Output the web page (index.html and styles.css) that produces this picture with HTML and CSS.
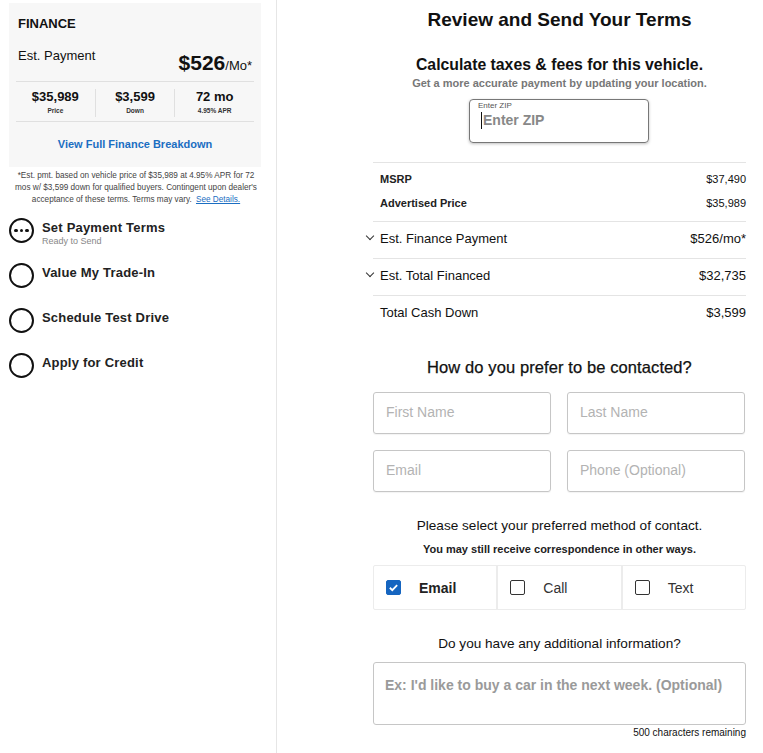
FILE: index.html
```html
<!DOCTYPE html>
<html>
<head>
<meta charset="utf-8">
<link rel="stylesheet" href="styles.css">
</head>
<body>
<div class="page">
  <aside class="side">
    <div class="card">
      <div class="card-title">FINANCE</div>
      <div class="pay-row">
        <span class="pay-label">Est. Payment</span>
        <span class="pay-value"><span class="big">$526</span><span class="mo">/Mo*</span></span>
      </div>
      <div class="stats">
        <div class="stat"><div class="sv">$35,989</div><div class="sl">Price</div></div>
        <div class="stat"><div class="sv">$3,599</div><div class="sl">Down</div></div>
        <div class="stat"><div class="sv">72 mo</div><div class="sl">4.95% APR</div></div>
      </div>
      <a class="breakdown">View Full Finance Breakdown</a>
    </div>
    <p class="disclaimer">*Est. pmt. based on vehicle price of $35,989 at 4.95% APR for 72 mos w/ $3,599 down for qualified buyers. Contingent upon dealer's acceptance of these terms. Terms may vary. <a class="see">See Details.</a></p>
    <ul class="steps">
      <li class="step active">
        <span class="ring"><span class="dot"></span><span class="dot"></span><span class="dot"></span></span>
        <div><div class="step-name">Set Payment Terms</div><div class="step-sub">Ready to Send</div></div>
      </li>
      <li class="step"><span class="ring"></span><div class="step-name">Value My Trade-In</div></li>
      <li class="step"><span class="ring"></span><div class="step-name">Schedule Test Drive</div></li>
      <li class="step"><span class="ring"></span><div class="step-name">Apply for Credit</div></li>
    </ul>
  </aside>
  <main class="main">
    <div class="content">
      <h1 class="title">Review and Send Your Terms</h1>
      <h2 class="sub">Calculate taxes &amp; fees for this vehicle.</h2>
      <p class="hint">Get a more accurate payment by updating your location.</p>
      <div class="zip">
        <span class="zip-label">Enter ZIP</span>
        <span class="zip-ph"><span class="caret"></span>Enter ZIP</span>
      </div>

      <div class="summary">
        <div class="group small">
          <div class="line"><span>MSRP</span><span>$37,490</span></div>
          <div class="line"><span>Advertised Price</span><span>$35,989</span></div>
        </div>
        <div class="row"><span class="lbl"><span class="chev"></span>Est. Finance Payment</span><span>$526/mo*</span></div>
        <div class="row"><span class="lbl"><span class="chev"></span>Est. Total Financed</span><span>$32,735</span></div>
        <div class="row last"><span class="lbl">Total Cash Down</span><span>$3,599</span></div>
      </div>

      <h2 class="q">How do you prefer to be contacted?</h2>
      <div class="fields">
        <div class="field">First Name</div>
        <div class="field">Last Name</div>
        <div class="field">Email</div>
        <div class="field">Phone (Optional)</div>
      </div>

      <p class="method">Please select your preferred method of contact.</p>
      <p class="method-sub">You may still receive correspondence in other ways.</p>
      <div class="choices">
        <div class="choice on"><span class="box"><svg viewBox="0 0 16 16" width="16" height="16"><path d="M3.5 8.3l3 3 6-6.2" fill="none" stroke="#fff" stroke-width="2.2"/></svg></span><span class="cl">Email</span></div>
        <div class="choice"><span class="box"></span><span class="cl">Call</span></div>
        <div class="choice"><span class="box"></span><span class="cl">Text</span></div>
      </div>

      <p class="method extra">Do you have any additional information?</p>
      <div class="textarea">Ex: I'd like to buy a car in the next week. (Optional)</div>
      <div class="remaining">500 characters remaining</div>
    </div>
  </main>
</div>
</body>
</html>
```
FILE: styles.css
```css
* { box-sizing: border-box; }
html, body { margin: 0; padding: 0; background: #fff; }
body { font-family: "Liberation Sans", Arial, sans-serif; color: #111; }
.page { display: flex; min-height: 753px; }
.side { width: 277px; border-right: 1px solid #e6e6e6; padding: 3px 0 0 0; flex-shrink: 0; }
.card { margin: 0 15px 0 9px; background: #f7f7f7; padding: 13px 7px 0 7px; height: 164px; }
.card-title { font-size: 13px; font-weight: bold; padding-left: 2px; line-height: 15px; }
.pay-row { display: flex; justify-content: space-between; padding: 15px 2px 0 2px; height: 51px; border-bottom: 1px solid #e0e0e0; }
.pay-label { font-size: 13px; line-height: 18px; padding-top: 1px; }
.pay-value { padding-top: 5px; }
.pay-value .big { font-size: 21px; font-weight: bold; }
.pay-value .mo { font-size: 13px; }
.stats { display: flex; height: 40px; border-bottom: 1px solid #e0e0e0; padding: 7px 0 4px 0; }
.stat { flex: 1; text-align: center; border-right: 1px solid #e0e0e0; }
.stat:last-child { border-right: none; }
.sv { font-size: 13px; font-weight: bold; line-height: 16px; }
.sl { font-size: 6.5px; font-weight: bold; color: #333; line-height: 12px; }
.breakdown { display: block; text-align: center; color: #1b6ec2; font-size: 11px; font-weight: bold; padding-top: 16px; }
.disclaimer { margin: 3px 0 0 0; text-align: center; font-size: 8.2px; line-height: 12px; color: #444; padding: 0 16px 0 12px; }
.see { color: #1b6ec2; text-decoration: underline; margin-left: 2px; }
.steps { list-style: none; margin: 11px 0 0 9px; padding: 0; }
.step { display: flex; align-items: flex-start; height: 45px; }
.ring { width: 25px; height: 25px; border: 2.5px solid #111; border-radius: 50%; flex-shrink: 0; display: flex; align-items: center; justify-content: center; gap: 2px; margin-top: 1px; }
.dot { width: 3.5px; height: 3.5px; border-radius: 50%; background: #111; }
.step-name { font-size: 13px; font-weight: bold; color: #222; margin-left: 8px; line-height: 16px; padding-top: 3px; letter-spacing: 0.2px; }
.step-sub { font-size: 9px; color: #888; margin-left: 8px; line-height: 10px; }
.main { flex: 1; }
.content { width: 373px; margin-left: 96px; text-align: center; }
.title { font-size: 19px; font-weight: bold; margin: 9px 0 0 0; line-height: 22px; }
.sub { font-size: 15.8px; font-weight: bold; margin: 24px 0 0 0; line-height: 20px; }
.hint { font-size: 11px; font-weight: bold; color: #777; margin: 2px 0 0 0; line-height: 13px; }
.zip { width: 180px; height: 44px; margin: 9px 0 0 96px; border: 1px solid #777; border-radius: 4px; box-shadow: 0 1px 3px rgba(0,0,0,0.25); text-align: left; padding: 1px 0 0 8px; }
.zip-label { display: block; font-size: 8px; color: #555; line-height: 10px; }
.zip-ph { display: flex; align-items: center; font-size: 14px; font-weight: bold; color: #888; line-height: 18px; padding-left: 3px; }
.caret { display: inline-block; width: 1px; height: 17px; background: #111; margin-right: 1px; }
.summary { margin-top: 19px; border-top: 1px solid #e4e4e4; text-align: left; }
.group { border-bottom: 1px solid #e4e4e4; padding: 4px 0 6px 7px; }
.line { display: flex; justify-content: space-between; font-size: 11px; line-height: 24px; }
.line span:first-child { font-weight: bold; color: #222; }
.row { display: flex; justify-content: space-between; font-size: 13px; height: 37px; align-items: center; padding-bottom: 4px; border-bottom: 1px solid #e4e4e4; }
.row.last { border-bottom: none; }
.lbl { display: flex; align-items: center; padding-left: 7px; position: relative; }
.chev { position: absolute; left: -6px; top: 2px; width: 6px; height: 6px; border-right: 1px solid #333; border-bottom: 1px solid #333; transform: rotate(45deg); }
.q { font-size: 16.5px; font-weight: normal; margin: 24px 0 0 0; line-height: 20px; letter-spacing: 0.1px; -webkit-text-stroke: 0.25px #111; }
.fields { display: grid; grid-template-columns: 1fr 1fr; gap: 16px 16px; margin-top: 15px; padding-right: 1px; }
.field { height: 42px; border: 1px solid #c6c6c6; border-radius: 3px; text-align: left; font-size: 14px; color: #b3b3b3; padding: 11px 0 0 12px; box-shadow: 0 1px 1px rgba(0,0,0,0.05); }
.method { font-size: 13.6px; margin: 26px 0 0 0; line-height: 16px; }
.method-sub { font-size: 11px; font-weight: bold; color: #222; margin: 8px 0 0 0; line-height: 14px; }
.choices { display: flex; margin-top: 9px; border: 1px solid #ececec; height: 45px; border-radius: 2px; }
.choice { flex: 1; display: flex; align-items: center; padding-left: 12px; border-right: 2px solid #ececec; }
.choice:last-child { border-right: none; }
.box { width: 15px; height: 15px; border: 1.5px solid #333; border-radius: 2px; display: flex; align-items: center; justify-content: center; }
.choice.on .box { background: #1565c0; border-color: #1565c0; }
.box svg { width: 13px; height: 13px; }
.cl { font-size: 14px; color: #333; margin-left: 18px; }
.choice.on .cl { font-weight: bold; color: #222; margin-left: 18px; }
.method.extra { margin-top: 26px; }
.textarea { margin-top: 10px; height: 63px; border: 1px solid #c6c6c6; border-radius: 3px; text-align: left; padding: 14px 0 0 11px; font-size: 14px; font-weight: bold; color: #9a9a9a; }
.remaining { text-align: right; font-size: 10px; margin-top: 1px; line-height: 14px; color: #111; }
```
